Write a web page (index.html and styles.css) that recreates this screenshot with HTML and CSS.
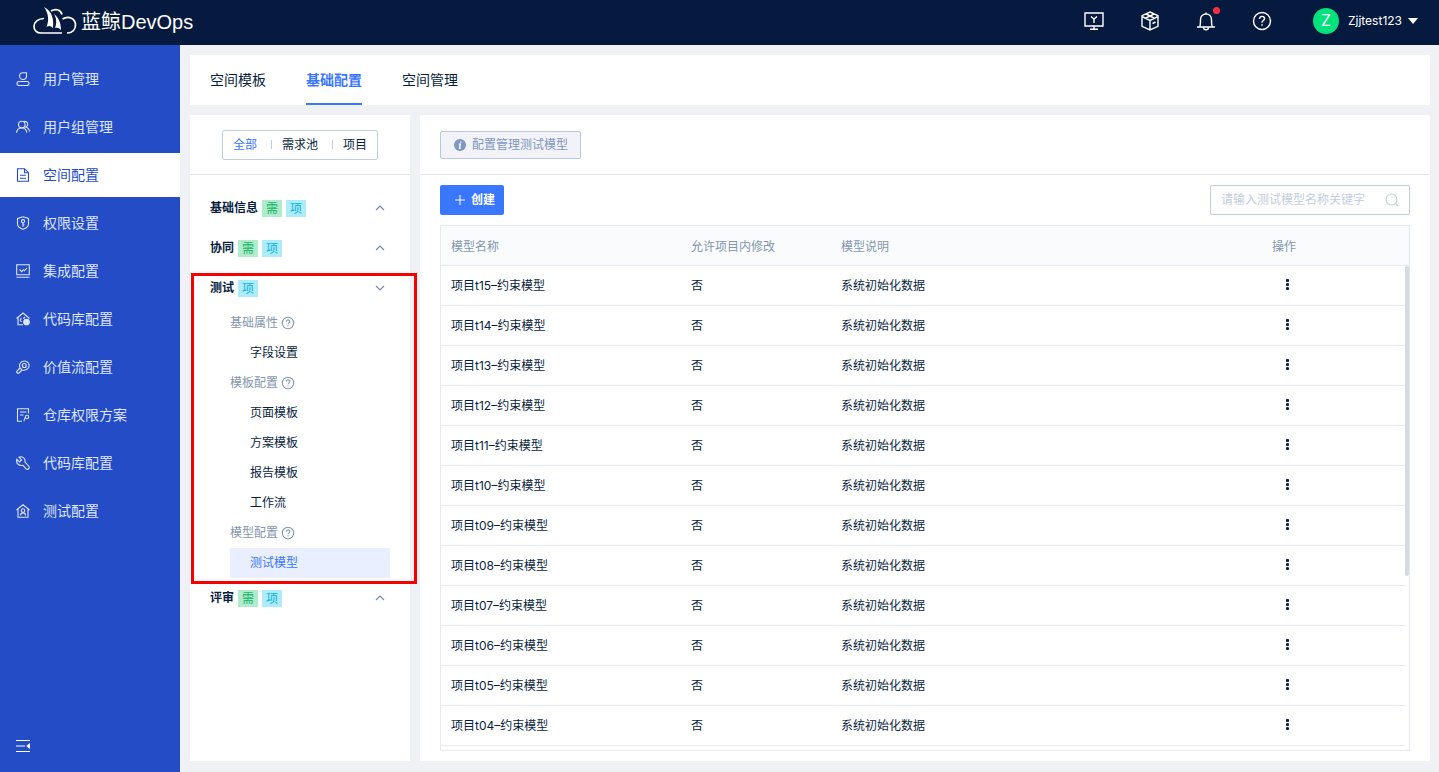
FILE: index.html
```html
<!DOCTYPE html>
<html lang="zh-CN">
<head>
<meta charset="utf-8">
<title>蓝鲸 DevOps</title>
<link rel="stylesheet" href="styles.css">
</head>
<body>
<div class="app">
  <header class="topbar">
    <a class="brand" href="#">
      <svg class="brand-mark" viewBox="0 0 44 28" fill="none" stroke="#fff" stroke-width="1.7">
        <path d="M29 26H8C3.500 26 1 23 1 19.500C1 15 5 11.500 11 11.500"/>
        <path d="M34 26C39.500 26 42.500 22.500 42.500 18C42.500 12 36 8 29.500 12"/>
        <path d="M18 4C22 1.500 27.500 2 29 7.500"/>
        <path fill="#fff" stroke="none" d="M11 0C19 4 21 12 20 21C18 19 16 18 13.500 20C16 14 16 7 11 0zM21 7C25 10 28 15 28 23C26 21 25 20.500 22 21C24 16 23.500 11 21 7z"/>
      </svg>
      <span class="brand-name">蓝鲸DevOps</span>
    </a>
    <nav class="tools">
      <button class="tool" aria-label="工作台"><svg viewBox="0 0 20 20" class="ic"><path d="M1 2h18v13H1zM10 15v3M6 18.300h8M7 5.500l3 2.500 3-2.500M10 8v4"/></svg></button>
      <button class="tool" aria-label="产品"><svg viewBox="0 0 20 20" class="ic"><path d="M10 1l8 3.700v10.600l-8 3.700-8-3.700V4.700zM2 5.500L10 9.500l8-4M10 9.500V19M6 3l8 4M14 3L6 7M12.500 12.500l3-1.500"/></svg></button>
      <button class="tool" aria-label="通知"><svg viewBox="0 0 20 20" class="ic"><path d="M1 16h18M3.500 16c1-1 1-3 1-7.500C4.500 5 7 3 10 3s5.500 2 5.500 5.500c0 4.500 0 6.500 1 7.500M10 3V1.500M7.500 16.500c0 3 5 3 5 0"/></svg><span class="dot"></span></button>
      <button class="tool" aria-label="帮助"><svg viewBox="0 0 20 20" class="ic"><circle cx="10" cy="10" r="8.500"/><path d="M7.500 8c0-3.500 5-3.500 5-.3 0 1.800-2.500 2-2.500 4M10 13.300v1.500"/></svg></button>
      <button class="user"><span class="avatar">Z</span><span>Zjjtest123</span><span class="caret"></span></button>
    </nav>
  </header>
  <div class="body">
    <aside class="sidebar">
      <nav class="menu">
        <a href="#" class="menu-item"><svg viewBox="0 0 14 14" class="ic"><path d="M10.500.700H7C4.500.700 3.500 2.300 3.500 4S5 7.500 7 7.500s3.500-1.500 3.500-3.500zM3 9.500h8a2 2 0 0 1 0 4H3a2 2 0 0 1 0-4z"/></svg>用户管理</a>
        <a href="#" class="menu-item"><svg viewBox="0 0 14 14" class="ic"><circle cx="5.800" cy="4.500" r="3.300"/><path d="M.5 12.800c.3-3 2-4.800 5.300-4.800s4.700 1.800 5 4.800M8 1.500c4-1 5 4.500 1.500 5.500 2.300.7 3.700 2 4 4.500"/></svg>用户组管理</a>
        <a href="#" class="menu-item active"><svg viewBox="0 0 14 14" class="ic"><path d="M1.500.7h7l4 4v8.600h-11zM8.500.7v4h4M4 7.300h6M4 10.300h6"/></svg>空间配置</a>
        <a href="#" class="menu-item"><svg viewBox="0 0 14 14" class="ic"><path d="M7 .8l5.500 1.700v5.500c0 2.500-2.500 4.300-5.500 5.300-3-1-5.500-2.800-5.500-5.300V2.500z"/><circle cx="7" cy="5.200" r="1.600"/><path d="M7 6.800v4M7 9h1.500"/></svg>权限设置</a>
        <a href="#" class="menu-item"><svg viewBox="0 0 14 14" class="ic"><path d="M.7.700h12.600v10H.7zM.5 13.300h13M3.500 5.500l2.300 2.200 1.700-2 1 1L11 4"/></svg>集成配置</a>
        <a href="#" class="menu-item"><svg viewBox="0 0 14 14" class="ic"><path d="M.5 6.500L7 1l6.500 5.500M2 5.500v7.300h5M5.500 6L4 8l1.500 2M7.500 6.500L9 5"/><circle cx="10.500" cy="10" r="2.800" fill="currentColor"/></svg>代码库配置</a>
        <a href="#" class="menu-item"><svg viewBox="0 0 14 14" class="ic"><path d="M4 8L1 11c-.8 1.500.5 2.500 2 2l3-3M4 8C2.500 4 5 1 8.500 1S13.500 4 13 6.500 9 11 6 10z"/><circle cx="8.300" cy="5.500" r="2"/></svg>价值流配置</a>
        <a href="#" class="menu-item"><svg viewBox="0 0 14 14" class="ic"><path d="M12.500 5.500V.7h-11v12.600H6M4 4h6.500M4 7h3.500M8 13.300c0-2 .5-3 1.500-4"/><circle cx="11" cy="9" r="1.700"/></svg>仓库权限方案</a>
        <a href="#" class="menu-item"><svg viewBox="0 0 14 14" class="ic"><path d="M3 1.200C6 0 9.700 2 9 6l4 4.500c1 1.700-1 3.500-2.700 2.500L7 9.300C3.500 10.300-.5 7.500.8 3.300L3.500 6l2-2z"/></svg>代码库配置</a>
        <a href="#" class="menu-item"><svg viewBox="0 0 14 14" class="ic"><path d="M.5 6L7 .8 13.500 6M2 5v8.300h10V5M4.500 11.500c0-3.500 5-3.500 5 0"/><circle cx="7" cy="6.500" r="1.800"/></svg>测试配置</a>
      </nav>
      <button class="collapse" aria-label="收起"><svg viewBox="0 0 14 14" class="ic"><path d="M0 1.500h14M0 7h9M0 12.500h14"/><path d="M13.500 5v4l-2.500-2z" fill="currentColor"/></svg></button>
    </aside>
    <main class="main">
      <nav class="tabs">
        <a href="#" class="tab">空间模板</a>
        <a href="#" class="tab active">基础配置</a>
        <a href="#" class="tab">空间管理</a>
      </nav>
      <div class="panels">
        <section class="panel tree-panel">
          <div class="panel-head centered">
            <div class="segment">
              <button class="seg active">全部</button>
              <button class="seg">需求池</button>
              <button class="seg">项目</button>
            </div>
          </div>
          <div class="tree">
            <button class="node">基础信息<span class="tag green">需</span><span class="tag cyan">项</span><svg viewBox="0 0 10 10" class="ic chevron"><path d="M1 7l4-4 4 4"/></svg></button>
            <button class="node">协同<span class="tag green">需</span><span class="tag cyan">项</span><svg viewBox="0 0 10 10" class="ic chevron"><path d="M1 7l4-4 4 4"/></svg></button>
            <div class="group">
              <button class="node">测试<span class="tag cyan">项</span><svg viewBox="0 0 10 10" class="ic chevron"><path d="M1 3l4 4 4-4"/></svg></button>
              <div class="sub">基础属性<svg viewBox="0 0 14 14" class="ic help"><circle cx="7" cy="7" r="5.700"/><path d="M5.200 5.700c0-2.400 3.600-2.400 3.600-.2 0 1.300-1.800 1.400-1.800 2.800M7 9.300v1"/></svg></div>
              <a href="#" class="leaf">字段设置</a>
              <div class="sub">模板配置<svg viewBox="0 0 14 14" class="ic help"><circle cx="7" cy="7" r="5.700"/><path d="M5.200 5.700c0-2.400 3.600-2.400 3.600-.2 0 1.300-1.800 1.400-1.800 2.800M7 9.300v1"/></svg></div>
              <a href="#" class="leaf">页面模板</a>
              <a href="#" class="leaf">方案模板</a>
              <a href="#" class="leaf">报告模板</a>
              <a href="#" class="leaf">工作流</a>
              <div class="sub">模型配置<svg viewBox="0 0 14 14" class="ic help"><circle cx="7" cy="7" r="5.700"/><path d="M5.200 5.700c0-2.400 3.600-2.400 3.600-.2 0 1.300-1.800 1.400-1.800 2.800M7 9.300v1"/></svg></div>
              <a href="#" class="leaf active">测试模型</a>
              <div class="marker"></div>
            </div>
            <button class="node">评审<span class="tag green">需</span><span class="tag cyan">项</span><svg viewBox="0 0 10 10" class="ic chevron"><path d="M1 7l4-4 4 4"/></svg></button>
          </div>
        </section>
        <section class="panel content">
          <div class="panel-head">
            <button class="info"><svg viewBox="0 0 12 12" class="info-icon"><circle cx="6" cy="6" r="6" fill="#7f95c4"/><path d="M6.800 2.500v1.300M4.800 5.200h1.500L5.500 9h1.300" fill="none" stroke="#fff" stroke-width="1.300"/></svg>配置管理测试模型</button>
          </div>
          <div class="toolbar">
            <button class="create"><svg viewBox="0 0 10 10" class="plus"><path d="M5 0v10M0 5h10"/></svg>创建</button>
            <label class="search"><input type="text" aria-label="搜索测试模型" placeholder="请输入测试模型名称关键字"><svg viewBox="0 0 14 14" class="ic"><circle cx="6.500" cy="6.500" r="5.500"/><path d="M10.500 10.500l2.500 2.500"/></svg></label>
          </div>
          <div class="table-box">
            <table class="table">
              <thead><tr><th class="c-name">模型名称</th><th class="c-edit">允许项目内修改</th><th>模型说明</th><th class="c-op">操作</th></tr></thead>
              <tbody id="rows"></tbody>
            </table>
            <div class="track"><div class="thumb"></div></div>
          </div>
        </section>
      </div>
    </main>
  </div>
</div>
<script src="rows.js"></script>
</body>
</html>
```

FILE: rows.js
```js
const names = ["t15", "t14", "t13", "t12", "t11", "t10", "t09", "t08", "t07", "t06", "t05", "t04"];
document.getElementById("rows").innerHTML = names.map(n =>
  `<tr><td>项目${n}–约束模型</td><td>否</td><td>系统初始化数据</td>` +
  `<td><button class="more" aria-label="更多操作"><svg viewBox="0 0 3 11"><circle cx="1.500" cy="1.500" r="1.600"/><circle cx="1.500" cy="5.500" r="1.600"/><circle cx="1.500" cy="9.500" r="1.600"/></svg></button></td></tr>`
).join("");
```

FILE: styles.css
```css
* { box-sizing: border-box; }
body {
  margin: 0;
  font: 12px/20px Inter, "Noto Sans CJK SC", sans-serif;
  color: #081e40;
  background: #f0f1f5;
}
button, input { font: inherit; color: inherit; background: none; border: 0; padding: 0; margin: 0; }
button { cursor: pointer; }
a { color: inherit; text-decoration: none; }
.ic { fill: none; stroke: currentColor; stroke-width: 1.1; flex: none; }

.app { height: 100vh; display: flex; flex-direction: column; }
.topbar {
  height: 45px; flex: none; padding: 0 21px 4px 33px;
  display: flex; align-items: center; justify-content: space-between;
  background: #061a40; color: #fff;
}
.brand { display: flex; align-items: center; gap: 4px; }
.brand-mark { width: 44px; height: 28px; }
.brand-name { padding-top: 2px; font: 20px/28px "Liberation Sans", "Noto Sans CJK SC", sans-serif; }
.tools { display: flex; align-items: center; gap: 36px; }
.tool { position: relative; width: 20px; height: 20px; }
.tool .ic { display: block; width: 20px; height: 20px; stroke-width: 1.4; }
.dot { position: absolute; right: -4px; top: -4px; width: 7px; height: 7px; border-radius: 50%; background: #ff2f3f; }
.user { display: flex; align-items: center; gap: 9px; margin-left: 5px; }
.avatar { width: 26px; height: 26px; border-radius: 50%; background: #00e37c; font-size: 16px; line-height: 24px; }
.caret { border: 5px solid transparent; border-top: 6px solid #fff; border-bottom: 0; margin-left: -3px; }

.body { flex: 1; min-height: 0; display: flex; }
.sidebar {
  width: 180px; flex: none; padding: 12px 0 18px;
  display: flex; flex-direction: column; justify-content: space-between;
  background: #244cc7; color: #dfe5f8;
}
.menu { display: flex; flex-direction: column; gap: 4px; }
.menu-item { height: 44px; padding-left: 16px; display: flex; align-items: center; gap: 13px; font-size: 14px; }
.menu-item .ic { width: 14px; height: 14px; }
.menu-item.active { background: #fff; color: #244cc7; }
.collapse { width: 14px; height: 16px; margin-left: 16px; color: #fff; }
.collapse .ic { display: block; width: 14px; height: 14px; }

.main { flex: 1; min-width: 0; padding: 10px 9px 11px 10px; display: flex; flex-direction: column; gap: 10px; }
.tabs { height: 50px; flex: none; padding: 0 20px; display: flex; gap: 40px; background: #fff; font-size: 14px; }
.tab { line-height: 50px; }
.tab.active { color: #3a77ff; font-weight: 700; border-bottom: 2px solid #3a77ff; }
.panels { flex: 1; min-height: 0; display: flex; gap: 10px; }
.panel { background: #fff; }
.panel-head { height: 60px; flex: none; padding: 0 20px; display: flex; align-items: center; border-bottom: 1px solid #e6e7ec; }
.centered { justify-content: center; }

.tree-panel { width: 220px; flex: none; }
.segment { height: 30px; display: flex; align-items: center; border: 1px solid #c3cde0; border-radius: 2px; }
.seg { padding: 0 10px; display: flex; align-items: center; }
.seg + .seg::before { content: ""; width: 1px; height: 9px; margin: 0 10px 0 -6px; background: #c3cde0; }
.seg.active { color: #3a77ff; }
.tree { padding: 13px 20px; }
.node { width: 100%; height: 40px; display: flex; align-items: center; gap: 4px; font-weight: 700; }
.tag { width: 20px; height: 17px; line-height: 17px; font-weight: 400; text-align: center; }
.green { background: #b0ebce; color: #10b565; }
.cyan { background: #aeebfb; color: #07b3e0; }
.chevron { width: 10px; height: 10px; margin: 0 5px 0 auto; color: #7587a6; }
.group { position: relative; }
.sub { height: 30px; padding-left: 20px; display: flex; align-items: center; gap: 3px; color: #8496ae; }
.help { width: 14px; height: 14px; }
.leaf { display: block; margin-left: 20px; padding-left: 20px; line-height: 30px; }
.leaf.active { background: #e9efff; color: #3a77ff; }
.marker { position: absolute; top: 5px; right: -27px; bottom: -6px; left: -19px; border: 3px solid #f60000; pointer-events: none; }

.content { flex: 1; min-width: 0; display: flex; flex-direction: column; }
.info {
  height: 28px; padding: 0 12px 0 13px; display: flex; align-items: center; gap: 6px;
  border: 1px solid #b9c7e2; border-radius: 2px; background: #f1f3f8; color: #8296c2;
}
.info-icon { width: 12px; height: 12px; }
.toolbar { padding: 10px 20px; display: flex; justify-content: space-between; }
.create {
  height: 30px; padding: 0 9px 0 15px; display: flex; align-items: center; gap: 6px;
  background: #3a77ff; color: #fff; border-radius: 2px; font-weight: 700;
}
.plus { width: 10px; height: 10px; stroke: #fff; }
.search { width: 200px; height: 30px; padding: 0 10px; display: flex; align-items: center; border: 1px solid #c3cde0; border-radius: 2px; color: #c3cde0; }
.search input { flex: 1; min-width: 0; outline: 0; color: #081e40; }
.search input::placeholder { color: #c3cde0; opacity: 1; }
.search .ic { width: 14px; height: 14px; }

.table-box { position: relative; flex: 1; min-height: 0; margin: 0 20px 10px; border: 1px solid #e6e9f2; overflow: hidden; }
.table { width: 100%; table-layout: fixed; border-collapse: separate; border-spacing: 0; }
.table th, .table td { height: 40px; padding: 0 10px; text-align: left; border-bottom: 1px solid #e6e9f2; }
.table th { padding-top: 2px; background: #fafbfd; color: #8496ae; font-weight: 400; }
.c-name { width: 240px; }
.c-edit { width: 150px; }
.c-op { width: 147px; }
.more { display: block; width: 30px; height: 20px; padding-bottom: 2px; }
.more svg { display: block; width: 3px; height: 11px; margin: 0 auto; fill: #081e40; }
.track { position: absolute; top: 40px; right: 0; bottom: 0; width: 4px; background: #fff; }
.thumb { height: 64%; border-radius: 2px; background: #d5dbe3; }
```
